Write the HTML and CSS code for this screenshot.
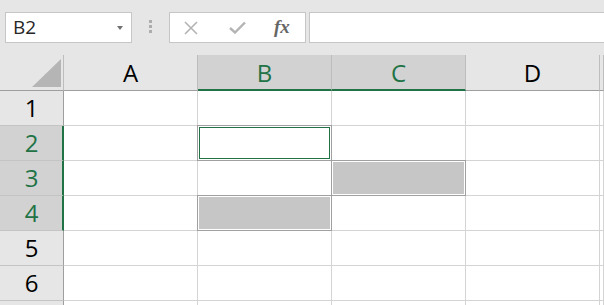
FILE: index.html
```html
<!DOCTYPE html>
<html>
<head>
<meta charset="utf-8">
<link rel="stylesheet" href="styles.css">
</head>
<body>
<div class="toolbar">
  <div class="namebox"><span class="ref">B2</span><span class="caret"></span></div>
  <div class="grip"><i></i><i></i><i></i></div>
  <div class="fxbox">
    <svg class="ic-x" width="14" height="14" viewBox="0 0 14 14"><path d="M1 1 L13 13 M13 1 L1 13" stroke="#b4b4b4" stroke-width="1.6" fill="none"/></svg>
    <svg class="ic-ok" width="17" height="13" viewBox="0 0 17 13"><path d="M1 7 L6 11.5 L16 1.5" stroke="#b4b4b4" stroke-width="2.4" fill="none"/></svg>
    <span class="fx">fx</span>
  </div>
  <div class="formula"></div>
</div>
<div class="sheet">
  <div class="corner"><svg width="29" height="28" viewBox="0 0 29 28"><polygon points="29,0 29,28 0,28" fill="#b5b5b5"/></svg></div>
  <div class="ch">A</div>
  <div class="ch sel">B</div>
  <div class="ch sel">C</div>
  <div class="ch">D</div>
  <div class="ch"></div>

  <div class="rh">1</div><div class="c"></div><div class="c"></div><div class="c"></div><div class="c"></div><div class="c"></div>
  <div class="rh sel">2</div><div class="c"></div><div class="c active"></div><div class="c"></div><div class="c"></div><div class="c"></div>
  <div class="rh sel">3</div><div class="c"></div><div class="c"></div><div class="c filled"></div><div class="c"></div><div class="c"></div>
  <div class="rh sel">4</div><div class="c"></div><div class="c filled"></div><div class="c"></div><div class="c"></div><div class="c"></div>
  <div class="rh">5</div><div class="c"></div><div class="c"></div><div class="c"></div><div class="c"></div><div class="c"></div>
  <div class="rh">6</div><div class="c"></div><div class="c"></div><div class="c"></div><div class="c"></div><div class="c"></div>
  <div class="rh"></div><div class="c"></div><div class="c"></div><div class="c"></div><div class="c"></div><div class="c"></div>
</div>
</body>
</html>
```

FILE: styles.css
```css
* { box-sizing: border-box; }
html, body { margin: 0; padding: 0; }
body {
  width: 604px;
  height: 305px;
  overflow: hidden;
  background: #e6e6e6;
  font-family: "Open Sans", "Noto Sans", sans-serif;
}

.toolbar {
  height: 55px;
  display: flex;
  align-items: flex-start;
  padding: 12px 0 0 5px;
}
.namebox {
  width: 127px;
  height: 31px;
  background: #fff;
  border: 1px solid #c6c6c6;
  display: flex;
  align-items: center;
  justify-content: space-between;
  padding: 0 8px 0 7px;
}
.ref {
  font-size: 19px;
  color: #262626;
  line-height: 1;
}
.caret {
  width: 0;
  height: 0;
  border-left: 3.5px solid transparent;
  border-right: 3.5px solid transparent;
  border-top: 4px solid #707070;
}
.grip {
  margin: 8px 0 0 17px;
  width: 3px;
  display: flex;
  flex-direction: column;
  gap: 2px;
}
.grip i {
  display: block;
  width: 3px;
  height: 3px;
  background: #adadad;
}
.fxbox {
  margin-left: 17px;
  width: 137px;
  height: 31px;
  background: #fff;
  border: 1px solid #c6c6c6;
  display: flex;
  align-items: center;
}
.ic-x { margin-left: 14px; }
.ic-ok { margin-left: 31px; }
.fx {
  margin-left: 28px;
  font-family: "Liberation Serif", "DejaVu Serif", serif;
  font-style: italic;
  font-weight: bold;
  font-size: 19px;
  color: #666;
  line-height: 1;
  margin-top: -2px;
}
.formula {
  margin-left: 3px;
  flex: 1;
  height: 31px;
  background: #fff;
  border: 1px solid #c6c6c6;
  border-right: none;
}

.sheet {
  display: grid;
  grid-template-columns: 64px 134px 134px 134px 134px 1fr;
  grid-template-rows: 36px repeat(7, 35px);
}
.corner {
  border-right: 1px solid #bdbdbd;
  border-bottom: 1px solid #9e9e9e;
  display: flex;
  align-items: flex-end;
  justify-content: flex-end;
  padding: 0 2px 3px 0;
}
.ch {
  border-right: 1px solid #bdbdbd;
  border-bottom: 1px solid #9e9e9e;
  display: flex;
  align-items: center;
  justify-content: center;
  font-size: 24px;
  color: #000;
  line-height: 1;
}
.ch.sel {
  background: #d2d2d2;
  color: #217346;
  border-bottom: 2px solid #217346;
  padding-top: 1px;
}
.rh {
  border-right: 1px solid #9e9e9e;
  border-bottom: 1px solid #c4c4c4;
  display: flex;
  align-items: center;
  justify-content: center;
  font-size: 24px;
  color: #000;
  line-height: 1;
}
.rh.sel {
  background: #d2d2d2;
  color: #217346;
  border-right: 2px solid #217346;
  padding-left: 1px;
}
.c {
  background: #fff;
  border-right: 1px solid #d4d4d4;
  border-bottom: 1px solid #d4d4d4;
  position: relative;
}
.c.active::before,
.c.filled::before {
  content: "";
  position: absolute;
  top: -1px; left: -1px; right: -1px; bottom: -1px;
  border: 1px solid #a0a0a0;
}
.c.active::after,
.c.filled::after {
  content: "";
  position: absolute;
  top: 1px; left: 1px; right: 1px; bottom: 1px;
}
.c.active::after { border: 1px solid #217346; }
.c.filled::after { background: #c6c6c6; }
```
